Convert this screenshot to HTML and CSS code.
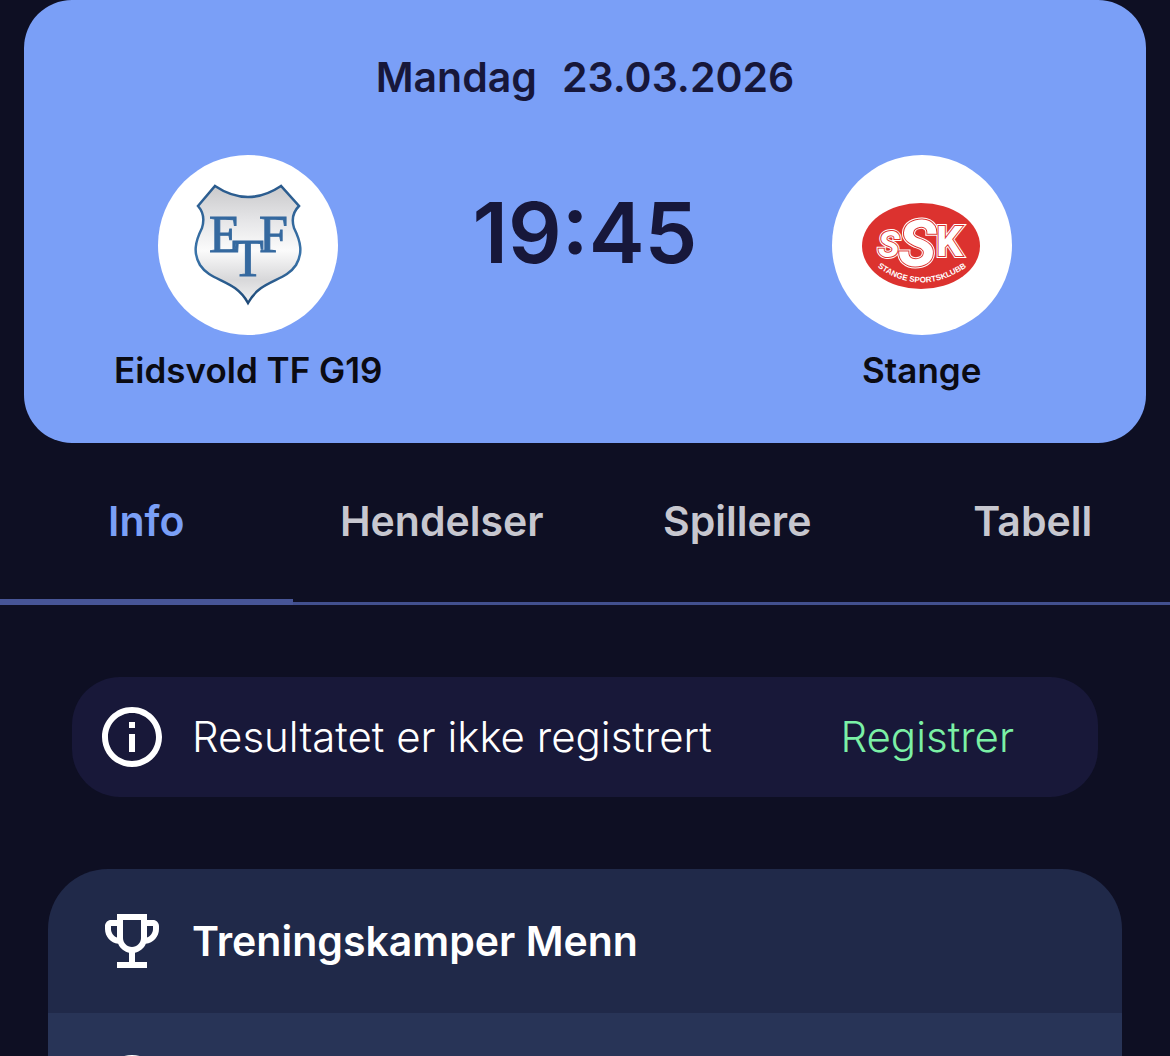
FILE: index.html
```html
<!DOCTYPE html>
<html lang="no">
<head>
<meta charset="utf-8">
<meta name="viewport" content="width=device-width, initial-scale=1">
<title>Eidsvold TF G19 – Stange</title>
<link rel="stylesheet" href="styles.css">
</head>
<body>
<div class="screen">
  <header class="match">
    <p class="match-date"><span>Mandag</span><time datetime="2026-03-23">23.03.2026</time></p>
    <div class="match-teams">
      <div class="team">
        <svg class="team-logo" viewBox="0 0 180 180" aria-hidden="true">
          <defs>
            <linearGradient id="silver" x1="0" y1="0" x2="0" y2="1">
              <stop offset="0" stop-color="#c9c9cb"/>
              <stop offset=".3" stop-color="#e6e6e8"/>
              <stop offset=".55" stop-color="#fbfbfb"/>
              <stop offset=".8" stop-color="#d8d8da"/>
              <stop offset="1" stop-color="#f2f2f2"/>
            </linearGradient>
            <linearGradient id="steel" x1="0" y1="0" x2="0" y2="1">
              <stop offset="0" stop-color="#2a5a8c"/>
              <stop offset=".6" stop-color="#3a74aa"/>
              <stop offset="1" stop-color="#1f4a78"/>
            </linearGradient>
          </defs>
          <path d="M57 31Q90 53 123 31L141 51Q132 60 136 73C143 87 145 98 138 110C127 127 103 124 90 148C77 124 53 127 42 110C35 98 37 87 44 73Q48 60 40 51Z" fill="url(#silver)" stroke="url(#steel)" stroke-width="2.5"/>
          <g class="etf">
            <text x="51" y="97">E</text>
            <text x="74" y="121">T</text>
            <text x="101" y="97">F</text>
          </g>
        </svg>
        <h2 class="team-name">Eidsvold TF G19</h2>
      </div>
      <p class="kickoff"><time datetime="19:45">19:45</time></p>
      <div class="team">
        <svg class="team-logo" viewBox="0 0 180 180" aria-hidden="true">
          <defs><path id="arc" d="M44 111Q89 144 136 111"/></defs>
          <ellipse cx="89" cy="91" rx="59" ry="43" fill="#dc322f"/>
          <g class="ssk-edge"><use href="#ssk"/></g>
          <g class="ssk-line"><use href="#ssk"/></g>
          <g class="ssk-fill">
            <g id="ssk" class="ssk">
              <text class="ssk-small" x="46" y="102">S</text>
              <text class="ssk-big" x="66" y="111">S</text>
              <text class="ssk-k" x="104" y="101">K</text>
            </g>
          </g>
          <text class="ssk-name"><textPath href="#arc" startOffset="50%">STANGE SPORTSKLUBB</textPath></text>
        </svg>
        <h2 class="team-name">Stange</h2>
      </div>
    </div>
  </header>

  <nav class="tabs" role="tablist">
    <button class="tab tab-active" type="button" role="tab" aria-selected="true">Info</button>
    <button class="tab" type="button" role="tab" aria-selected="false">Hendelser</button>
    <button class="tab" type="button" role="tab" aria-selected="false">Spillere</button>
    <button class="tab" type="button" role="tab" aria-selected="false">Tabell</button>
  </nav>

  <main class="content">
    <section class="notice">
      <svg class="icon" viewBox="0 0 24 24" aria-hidden="true"><path d="M11 7h2v2h-2zm0 4h2v6h-2zm1-9C6.480 2 2 6.480 2 12s4.480 10 10 10 10-4.480 10-10S17.520 2 12 2zm0 18c-4.410 0-8-3.590-8-8s3.590-8 8-8 8 3.590 8 8-3.590 8-8 8z"/></svg>
      <p class="notice-text">Resultatet er ikke registrert</p>
      <button class="register" type="button">Registrer</button>
    </section>

    <ul class="details">
      <li class="detail">
        <svg class="icon" viewBox="0 0 24 24" aria-hidden="true"><path d="M19 5h-2V3H7v2H5c-1.100 0-2 .9-2 2v1c0 2.550 1.920 4.630 4.390 4.940.63 1.500 1.980 2.630 3.610 2.960V19H7v2h10v-2h-4v-3.100c1.630-.33 2.980-1.460 3.610-2.960C19.080 12.630 21 10.550 21 8V7c0-1.100-.9-2-2-2zM5 8V7h2v3.820C5.840 10.400 5 9.300 5 8zm7 6c-1.650 0-3-1.350-3-3V5h6v6c0 1.650-1.350 3-3 3zm7-6c0 1.300-.84 2.400-2 2.820V7h2v1z"/></svg>
        <span>Treningskamper Menn</span>
      </li>
      <li class="detail detail-alt">
        <svg class="icon" viewBox="0 0 24 24" aria-hidden="true"><path d="M12 2a10 10 0 1 0 0 20a10 10 0 0 0 0-20zm0 18a8 8 0 1 1 0-16a8 8 0 0 1 0 16zm1-13h-2v6l5 3 1-1.700-4-2.300z"/></svg>
      </li>
    </ul>
  </main>
</div>
</body>
</html>
```
FILE: styles.css
```css
* {
  box-sizing: border-box;
  margin: 0;
  padding: 0;
}

body {
  background: #0e0f23;
  color: #fff;
  font-family: Inter, "Liberation Sans", sans-serif;
  font-size: 41px;
  font-weight: 600;
  line-height: 52px;
}

button {
  border: 0;
  background: none;
  color: inherit;
  font: inherit;
  cursor: pointer;
}

.screen {
  height: 100vh;
  overflow: hidden;
}

.match {
  margin: 0 24px;
  padding: 51px 0;
  border-radius: 48px;
  background: #7a9ff7;
  color: #17173a;
}

.match-date {
  display: flex;
  justify-content: center;
  gap: 25px;
  margin-bottom: 52px;
}

.match-teams {
  display: grid;
  grid-template-columns: 2fr 1fr 2fr;
}

.team {
  display: flex;
  flex-direction: column;
  align-items: center;
  gap: 13px;
}

.team-logo {
  width: 180px;
  height: 180px;
  border-radius: 50%;
  background: #fff;
}

.team-name {
  color: #0b0b12;
  font-size: 35px;
  font-weight: 600;
  line-height: 44px;
}

.kickoff {
  padding-top: 27px;
  font-size: 84px;
  line-height: 102px;
  text-align: center;
}

.etf {
  fill: #35699f;
  stroke: #35699f;
  stroke-width: 1;
  font-family: "Liberation Serif", serif;
  font-size: 52px;
  font-weight: 400;
}

.ssk {
  font-family: Roboto, sans-serif;
  font-weight: 700;
}

.ssk-small {
  font-size: 36px;
  font-style: italic;
}

.ssk-big {
  font-size: 64px;
  font-style: italic;
}

.ssk-k {
  font-size: 42px;
}

.ssk-edge {
  stroke: #fff;
  stroke-width: 4;
}

.ssk-line {
  stroke: #dc322f;
  stroke-width: 2;
}

.ssk-fill {
  fill: #fff;
}

.ssk-name {
  fill: #fff;
  font-family: "Liberation Sans", sans-serif;
  font-size: 8px;
  font-weight: 700;
  text-anchor: middle;
}

.tabs {
  display: grid;
  grid-template-columns: repeat(4, 25%);
  column-gap: 3px;
  box-shadow: inset 0 -3px #42508f;
}

.tab {
  padding: 52px 0;
  border-bottom: 6px solid transparent;
  color: #c7c7cf;
}

.tab-active {
  border-bottom-color: #475597;
  color: #7a9ff7;
}

.content {
  padding: 72px 48px 0;
}

.notice {
  display: flex;
  align-items: center;
  gap: 24px;
  margin: 0 24px 72px;
  padding: 24px 84px 24px 24px;
  border-radius: 48px;
  background: #181839;
  font-size: 42px;
  font-weight: 300;
}

.notice-text {
  flex: 1;
}

.register {
  color: #7bf0a5;
}

.icon {
  flex: none;
  width: 72px;
  height: 72px;
  fill: #fff;
}

.details {
  overflow: hidden;
  border-radius: 60px;
  list-style: none;
  background: #202949;
}

.detail {
  display: flex;
  align-items: center;
  gap: 24px;
  padding: 36px 48px;
}

.detail-alt {
  background: #283457;
}
```
